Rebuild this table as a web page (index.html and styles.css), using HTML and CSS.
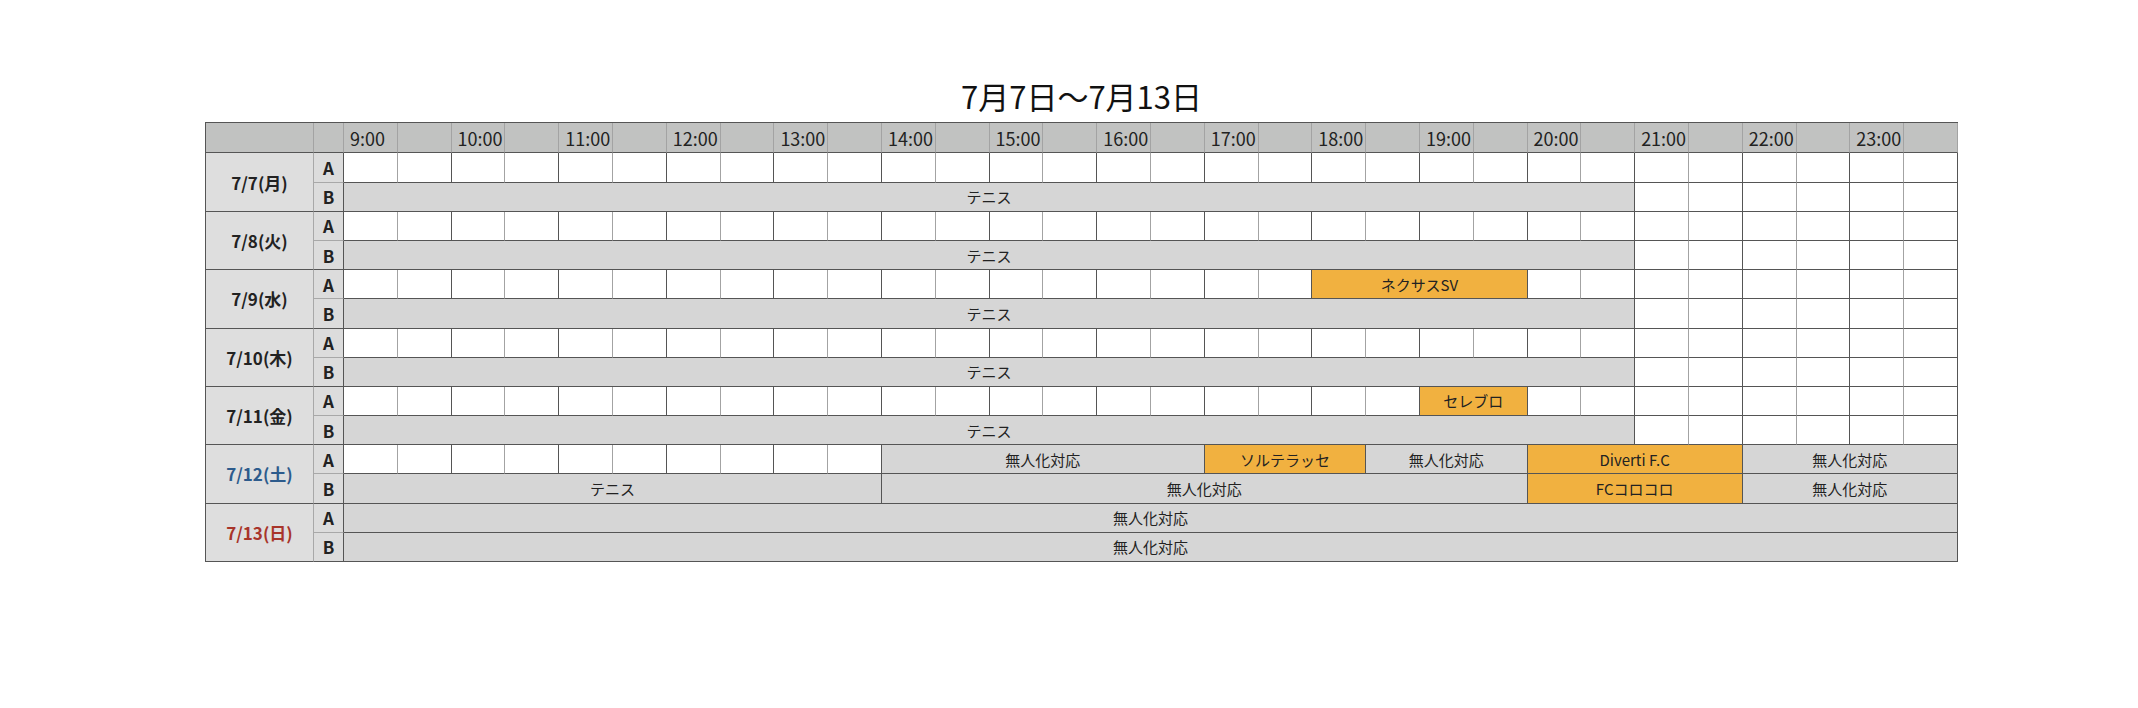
FILE: index.html
```html
<!DOCTYPE html>
<html lang="ja">
<head>
    <meta charset="UTF-8">
    <meta name="viewport" content="width=device-width, initial-scale=1.0">
    <title>7月7日〜7月13日 予約表</title>
    <link rel="stylesheet" href="styles.css">
</head>
<body>
    <div class="schedule">
        <h1 class="schedule-title">7月7日〜7月13日</h1>

        <table class="schedule-table">
            <colgroup>
                <col class="col-date">
                <col class="col-court">
            </colgroup>
            <thead>
                <tr id="timeRow">
                    <th class="corner"></th>
                    <th class="corner"></th>
                </tr>
            </thead>
            <tbody id="scheduleBody"></tbody>
        </table>
    </div>

    <script>
        // 1コマ = 30分、9:00〜24:00 で30コマ
        const SLOTS = 30;

        const tennis = ['テニス', 24, 'busy'];
        const weekday = [tennis, ['', 6]];

        const days = [
            { label: '7/7(月)', a: [['', 30]], b: weekday },
            { label: '7/8(火)', a: [['', 30]], b: weekday },
            { label: '7/9(水)', a: [['', 18], ['ネクサスSV', 4, 'booked'], ['', 8]], b: weekday },
            { label: '7/10(木)', a: [['', 30]], b: weekday },
            { label: '7/11(金)', a: [['', 20], ['セレブロ', 2, 'booked'], ['', 8]], b: weekday },
            {
                label: '7/12(土)', cls: 'sat',
                a: [['', 10], ['無人化対応', 6, 'busy'], ['ソルテラッセ', 3, 'booked'], ['無人化対応', 3, 'busy'], ['Diverti F.C', 4, 'booked'], ['無人化対応', 4, 'busy']],
                b: [['テニス', 10, 'busy'], ['無人化対応', 12, 'busy'], ['FCコロコロ', 4, 'booked'], ['無人化対応', 4, 'busy']]
            },
            { label: '7/13(日)', cls: 'sun', a: [['無人化対応', 30, 'busy']], b: [['無人化対応', 30, 'busy']] }
        ];

        // 時刻ヘッダー
        const timeRow = document.getElementById('timeRow');
        for (let i = 0; i < SLOTS; i++) {
            const th = document.createElement('th');
            th.className = 'time';
            if (i % 2 === 0) th.textContent = (9 + i / 2) + ':00';
            timeRow.appendChild(th);
        }

        function fillRow(tr, segments) {
            let slot = 0;
            segments.forEach(([text, span, type]) => {
                if (!type) {
                    for (let i = 0; i < span; i++) {
                        const td = document.createElement('td');
                        td.className = 'slot' + ((slot + i) % 2 === 0 ? ' half' : '');
                        tr.appendChild(td);
                    }
                } else {
                    const td = document.createElement('td');
                    td.className = type;
                    td.colSpan = span;
                    td.textContent = text;
                    tr.appendChild(td);
                }
                slot += span;
            });
        }

        const body = document.getElementById('scheduleBody');
        days.forEach(day => {
            ['A', 'B'].forEach(court => {
                const tr = document.createElement('tr');
                tr.className = court === 'A' ? 'row-a' : 'row-b';

                if (court === 'A') {
                    const date = document.createElement('td');
                    date.className = 'date' + (day.cls ? ' ' + day.cls : '');
                    date.rowSpan = 2;
                    date.textContent = day.label;
                    tr.appendChild(date);
                }

                const name = document.createElement('td');
                name.className = 'court';
                name.textContent = court;
                tr.appendChild(name);

                fillRow(tr, court === 'A' ? day.a : day.b);
                body.appendChild(tr);
            });
        });
    </script>
</body>
</html>
```

FILE: styles.css
```css
* {
    margin: 0;
    padding: 0;
    box-sizing: border-box;
}

body {
    font-family: "Noto Sans CJK JP", "Noto Sans", sans-serif;
    background: #ffffff;
    color: #222;
}

.schedule {
    width: 1753px;
    margin-left: 205px;
    padding-top: 76px;
}

.schedule-title {
    text-align: center;
    font-size: 31px;
    font-weight: 400;
    line-height: 40px;
    margin-bottom: 6px;
    color: #111;
}

.schedule-table {
    width: 1753px;
    table-layout: fixed;
    border-collapse: separate;
    border-spacing: 0;
    border-top: 1px solid #555;
    border-left: 1px solid #555;
}

.col-date {
    width: 108px;
}

.col-court {
    width: 30px;
}

.schedule-table th,
.schedule-table td {
    border-right: 1px solid #555;
    border-bottom: 1px solid #555;
    padding: 0;
    vertical-align: middle;
    white-space: nowrap;
}

/* ヘッダー */
thead tr {
    height: 30.4px;
}

.schedule-table th {
    background: #c1c2c1;
    border-right-color: #a3a3a3;
    font-size: 18px;
    font-weight: 400;
    text-align: left;
}

.schedule-table th.time {
    padding-left: 6px;
}

tbody tr {
    height: 29.2px;
}

/* 日付・コート */
.date {
    background: #dedede;
    text-align: center;
    font-size: 17px;
    font-weight: 700;
    border-right-color: #a8a8a8 !important;
}

.date.sat {
    color: #2d5b8c;
}

.date.sun {
    color: #a8352a;
}

.court {
    background: #dcdcdc;
    text-align: center;
    font-size: 17px;
    font-weight: 700;
}

.row-a .court {
    border-bottom-color: #a8a8a8 !important;
}

/* コマ */
.slot {
    background: #fff;
}

.slot.half {
    border-right-color: #a3a3a3 !important;
}

.busy,
.booked {
    text-align: center;
    font-size: 15px;
    color: #222;
}

.busy {
    background: #d6d6d6;
}

.booked {
    background: #f1b140;
}
```
